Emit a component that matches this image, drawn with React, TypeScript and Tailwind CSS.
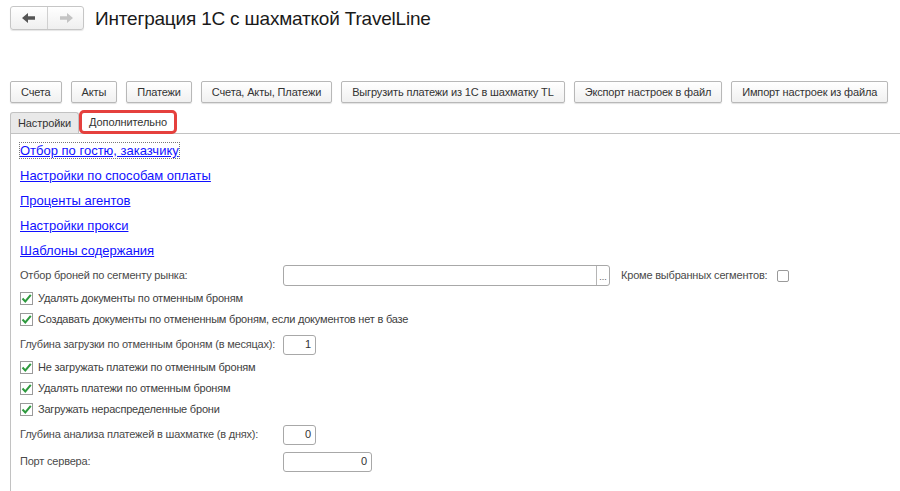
import React from "react";

const font = { fontFamily: '"Liberation Sans", Arial, sans-serif' };

function NavArrow({ dir, color }: { dir: "left" | "right"; color: string }) {
  return (
    <svg width="14" height="10" viewBox="0 0 14 10" className={dir === "right" ? "rotate-180" : ""}>
      <path d="M0 5 L6 0 L6 3.2 L13 3.2 L13 6.8 L6 6.8 L6 10 Z" fill={color} />
    </svg>
  );
}

function Btn({ children }: { children: React.ReactNode }) {
  return (
    <button className="h-[22px] px-[10px] border border-[#b8b8b8] rounded-[2px] bg-gradient-to-b from-white to-[#f0f0f0] shadow-[0_1px_1px_rgba(0,0,0,0.12)] text-[11px] tracking-[-0.15px] text-[#333] leading-none whitespace-nowrap">
      {children}
    </button>
  );
}

function Check({ label, checked = true }: { label: string; checked?: boolean }) {
  return (
    <div className="h-[21px] flex items-center">
      <span className="w-[13px] h-[13px] border border-[#9a9a9a] bg-white flex items-center justify-center">
        {checked && (
          <svg width="11" height="11" viewBox="0 0 11 11">
            <path d="M1.5 5.5 L4.3 8.5 L9.8 1.8" stroke="#2e9a3e" strokeWidth="2" fill="none" />
          </svg>
        )}
      </span>
      <span className="ml-[5px] text-[11px] tracking-[-0.2px] text-[#404040] whitespace-nowrap">{label}</span>
    </div>
  );
}

function NumField({ label, value, width }: { label: string; value: string; width: string }) {
  return (
    <div className="mt-[2px] h-[25px] flex items-center">
      <span className="w-[263px] shrink-0 text-[11px] tracking-[-0.2px] text-[#4a4a4a] whitespace-nowrap">{label}</span>
      <div
        className={`${width} h-[20px] border border-[#a8a8a8] rounded-[3px] bg-white flex items-center justify-end pr-[4px] text-[11px] text-[#333]`}
      >
        {value}
      </div>
    </div>
  );
}

const links = [
  "Отбор по гостю, заказчику",
  "Настройки по способам оплаты",
  "Проценты агентов",
  "Настройки прокси",
  "Шаблоны содержания",
];

export default function App() {
  return (
    <div className="w-[900px] h-[491px] bg-white overflow-hidden" style={font}>
      {/* header */}
      <div className="flex items-center pl-[10px] pt-[6px]">
        <div className="flex h-[24px] border border-[#c6c6c6] rounded-[3px] bg-gradient-to-b from-white to-[#efefef] shadow-[0_1px_1px_rgba(0,0,0,0.1)]">
          <div className="w-[37px] flex items-center justify-center border-r border-[#d0d0d0]">
            <NavArrow dir="left" color="#555" />
          </div>
          <div className="w-[35px] flex items-center justify-center">
            <NavArrow dir="right" color="#c4c4c4" />
          </div>
        </div>
        <h1 className="ml-[11px] text-[19px] tracking-[-0.2px] text-[#1a1a1a] leading-none">Интеграция 1С с шахматкой TravelLine</h1>
      </div>

      {/* command bar */}
      <div className="flex gap-[9px] pl-[10px] mt-[51px]">
        <Btn>Счета</Btn>
        <Btn>Акты</Btn>
        <Btn>Платежи</Btn>
        <Btn>Счета, Акты, Платежи</Btn>
        <Btn>Выгрузить платежи из 1С в шахматку TL</Btn>
        <Btn>Экспорт настроек в файл</Btn>
        <Btn>Импорт настроек из файла</Btn>
      </div>

      {/* tabs */}
      <div className="flex items-end pl-[10px] mt-[7px] h-[23px]">
        <div className="h-[21px] w-[69px] flex items-center justify-center border border-b-0 border-[#c2c2c2] rounded-t-[3px] bg-[#e9e9e9] text-[11px] tracking-[-0.1px] text-[#333]">
          Настройки
        </div>
        <div className="h-[24px] w-[98px] -mb-[1px] flex items-center justify-center border-[3px] border-[#e5403d] rounded-[5px] bg-white text-[11px] tracking-[-0.1px] text-[#333]">
          Дополнительно
        </div>
      </div>

      {/* panel */}
      <div className="ml-[10px] border-l border-t border-[#c2c2c2] h-[400px] pl-[9px] pt-[4px]">
        {links.map((l, i) => (
          <div key={l} className="h-[25px] flex items-center">
            <a
              href="#"
              className={`text-[13px] text-[#1010ff] underline leading-[15px] ${i === 0 ? "outline outline-1 outline-dotted outline-[#777]" : ""}`}
            >
              {l}
            </a>
          </div>
        ))}

        <div className="h-[25px] flex items-center">
          <span className="w-[263px] shrink-0 text-[11px] tracking-[-0.2px] text-[#4a4a4a]">Отбор броней по сегменту рынка:</span>
          <div className="w-[327px] h-[21px] border border-[#a8a8a8] rounded-[3px] bg-white flex justify-end">
            <div className="w-[13px] border-l border-[#b5b5b5] flex items-end justify-center pb-[3px] text-[9px] leading-none text-[#555]">
              ...
            </div>
          </div>
          <span className="ml-[11px] text-[11px] tracking-[-0.2px] text-[#4a4a4a]">Кроме выбранных сегментов:</span>
          <span className="ml-[10px] w-[12px] h-[12px] border border-[#9a9a9a] rounded-[2px] bg-white" />
        </div>

        <Check label="Удалять документы по отменным броням" />
        <Check label="Создавать документы по отмененным броням, если документов нет в базе" />
        <NumField label="Глубина загрузки по отменным броням (в месяцах):" value="1" width="w-[33px]" />
        <Check label="Не загружать платежи по отменным броням" />
        <Check label="Удалять платежи по отменным броням" />
        <Check label="Загружать нераспределенные брони" />
        <NumField label="Глубина анализа платежей в шахматке (в днях):" value="0" width="w-[33px]" />
        <NumField label="Порт сервера:" value="0" width="w-[89px]" />
      </div>
    </div>
  );
}
